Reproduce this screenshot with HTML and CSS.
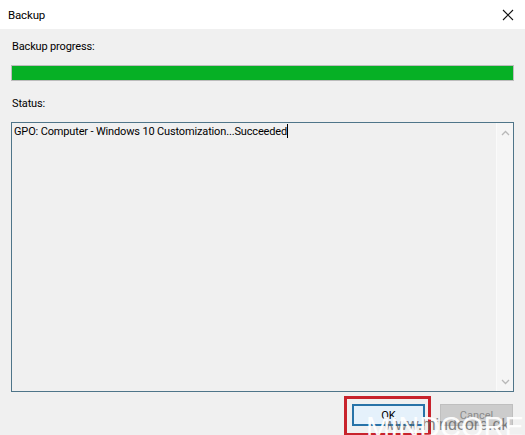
FILE: index.html
```html
<!DOCTYPE html>
<html lang="en">
<head>
  <meta charset="UTF-8" />
  <title>Backup</title>
  <link rel="stylesheet" href="styles.css">
</head>
<body>
  <div class="dialog">
    <div class="titlebar">
      <span class="title">Backup</span>
      <svg class="close" width="12" height="12" viewBox="0 0 12 12">
        <path d="M1 1 L11 11 M11 1 L1 11" stroke="#111" stroke-width="1.1" fill="none"/>
      </svg>
    </div>
    <div class="content">
      <div class="label">Backup progress:</div>
      <div class="progress"><div class="fill"></div></div>
      <div class="label status-label">Status:</div>
      <div class="status-box">
        <div class="status-text">GPO: Computer - Windows 10 Customization...Succeeded<span class="caret"></span></div>
        <div class="scrollbar">
          <svg width="9" height="6" viewBox="0 0 9 6"><path d="M1 5 L4.5 1.5 L8 5" stroke="#b8b8b8" stroke-width="1.3" fill="none"/></svg>
          <svg width="9" height="6" viewBox="0 0 9 6"><path d="M1 1 L4.5 4.5 L8 1" stroke="#b8b8b8" stroke-width="1.3" fill="none"/></svg>
        </div>
      </div>
      <div class="buttons">
        <div class="btn-wrap">
          <button class="btn ok">OK</button>
          <div class="highlight"></div>
        </div>
        <button class="btn cancel" disabled>Cancel</button>
      </div>
    </div>
    <div class="watermark">
      <span class="wm-url">www.mindcore.dk</span>
      <span class="wm-big">MINDCORE</span>
    </div>
  </div>
</body>
</html>
```

FILE: styles.css
```css
* { box-sizing: border-box; }
body {
  margin: 0;
  font-family: Roboto, "Noto Sans", sans-serif;
  font-size: 11px;
  letter-spacing: -0.15px;
  color: #000;
  background: #f0f0f0;
}
.dialog {
  width: 525px;
  height: 435px;
  position: relative;
  overflow: hidden;
  background: #f0f0f0;
}
.titlebar {
  height: 29px;
  background: #fff;
  display: flex;
  align-items: center;
  justify-content: space-between;
  padding: 0 11px 0 8px;
}
.title { font-size: 11.5px; }
.content {
  padding: 0 11px;
}
.label {
  margin-top: 10px;
  line-height: 16px;
  padding-left: 1px;
}
.progress {
  margin-top: 10px;
  height: 16px;
  border: 1px solid #bcbcbc;
  background: #e6e6e6;
}
.fill {
  height: 100%;
  width: 100%;
  background: #06b025;
}
.status-label { margin-top: 15px; }
.status-box {
  margin-top: 10px;
  height: 270px;
  border: 1px solid #4f7589;
  background: #f0f0f0;
  display: flex;
}
.status-text {
  flex: 1;
  padding: 1px 2px;
  line-height: 16px;
}
.caret {
  display: inline-block;
  width: 1px;
  height: 14px;
  background: #000;
  vertical-align: -3px;
}
.scrollbar {
  width: 17px;
  background: #f5f5f5;
  border-left: 1px solid #fafafa;
  display: flex;
  flex-direction: column;
  justify-content: space-between;
  align-items: center;
  padding: 7px 0 6px;
}
.buttons {
  margin-top: 12px;
  display: flex;
  justify-content: flex-end;
  gap: 15px;
  padding-right: 1px;
}
.btn-wrap { position: relative; }
.btn {
  width: 73px;
  height: 22px;
  font-family: inherit;
  font-size: 11px;
  padding: 0;
}
.ok {
  background: #e5f1fb;
  border: 2px solid #2873a8;
  color: #000;
}
.cancel {
  background: #cccccc;
  border: 1px solid #bfbfbf;
  color: #8a8a8a;
}
.highlight {
  position: absolute;
  left: -8px;
  top: -8px;
  width: 87px;
  height: 40px;
  border: 3px solid #c8232c;
}
.watermark {
  position: absolute;
  left: 366px;
  top: 410px;
  width: 160px;
  height: 30px;
  letter-spacing: 0;
}
.wm-big {
  position: absolute;
  left: 0;
  top: 3px;
  font-family: "Liberation Sans", sans-serif;
  font-size: 29px;
  color: rgba(255, 255, 255, 0.95);
  line-height: 28px;
}
.wm-url {
  position: absolute;
  left: 18px;
  top: 6px;
  font-family: "Liberation Sans", sans-serif;
  font-size: 16px;
  color: rgba(100, 100, 100, 0.8);
}
```
